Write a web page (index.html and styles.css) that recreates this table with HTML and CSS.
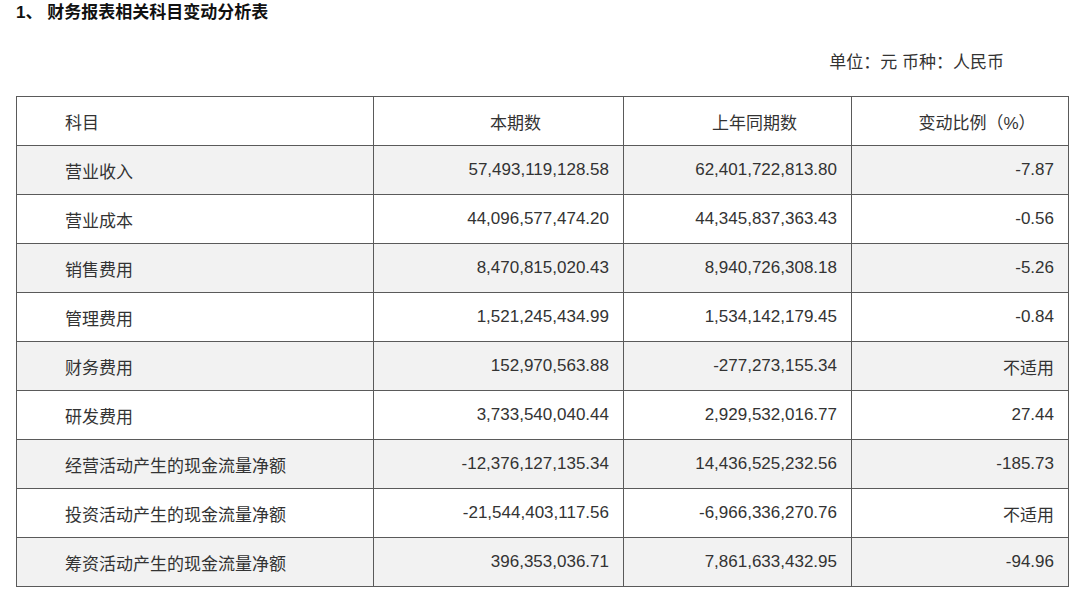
FILE: index.html
```html
<!DOCTYPE html>
<html lang="zh-CN">
<head>
<meta charset="utf-8">
<title>财务报表相关科目变动分析表</title>
<link rel="stylesheet" href="styles.css">
</head>
<body>
<div class="page">
  <h1 class="title">1、 财务报表相关科目变动分析表</h1>
  <div class="unit">单位：元 币种：人民币</div>
  <table class="fin">
    <colgroup>
      <col class="c1"><col class="c2"><col class="c3"><col class="c4">
    </colgroup>
    <thead>
      <tr><th class="name">科目</th><th>本期数</th><th>上年同期数</th><th>变动比例（%）</th></tr>
    </thead>
    <tbody>
      <tr><td class="name">营业收入</td><td>57,493,119,128.58</td><td>62,401,722,813.80</td><td>-7.87</td></tr>
      <tr><td class="name">营业成本</td><td>44,096,577,474.20</td><td>44,345,837,363.43</td><td>-0.56</td></tr>
      <tr><td class="name">销售费用</td><td>8,470,815,020.43</td><td>8,940,726,308.18</td><td>-5.26</td></tr>
      <tr><td class="name">管理费用</td><td>1,521,245,434.99</td><td>1,534,142,179.45</td><td>-0.84</td></tr>
      <tr><td class="name">财务费用</td><td>152,970,563.88</td><td>-277,273,155.34</td><td>不适用</td></tr>
      <tr><td class="name">研发费用</td><td>3,733,540,040.44</td><td>2,929,532,016.77</td><td>27.44</td></tr>
      <tr><td class="name">经营活动产生的现金流量净额</td><td>-12,376,127,135.34</td><td>14,436,525,232.56</td><td>-185.73</td></tr>
      <tr><td class="name">投资活动产生的现金流量净额</td><td>-21,544,403,117.56</td><td>-6,966,336,270.76</td><td>不适用</td></tr>
      <tr><td class="name">筹资活动产生的现金流量净额</td><td>396,353,036.71</td><td>7,861,633,432.95</td><td>-94.96</td></tr>
    </tbody>
  </table>
</div>
</body>
</html>
```
FILE: styles.css
```css
html, body {
  margin: 0;
  padding: 0;
  background: #ffffff;
}
body {
  font-family: "Liberation Sans", "Noto Sans CJK SC", sans-serif;
  color: #333333;
}
.page {
  width: 1052px;
  padding: 0 0 0 16px;
}
.title {
  margin: 0;
  font-size: 17px;
  line-height: 26px;
  font-weight: bold;
  color: #111111;
}
.unit {
  margin-top: 24px;
  font-size: 17px;
  line-height: 26px;
  text-align: right;
  padding-right: 64px;
  color: #333333;
}
.fin {
  margin-top: 20px;
  width: 1052px;
  border-collapse: collapse;
  table-layout: fixed;
  font-size: 17px;
}
.c1 { width: 357px; }
.c2 { width: 250px; }
.c3 { width: 228px; }
.c4 { width: 217px; }
.fin th, .fin td {
  border: 1px solid #5a5a5a;
  height: 49px;
  padding: 0 14px 0 14px;
  box-sizing: border-box;
  vertical-align: middle;
  white-space: nowrap;
  color: #333333;
}
.fin th {
  font-weight: normal;
  text-align: center;
  padding-left: 48px;
}
.fin td {
  text-align: right;
}
.fin .name {
  text-align: left;
  padding-left: 48px;
}
.fin tbody tr:nth-child(odd) {
  background: #f2f2f2;
}
```
